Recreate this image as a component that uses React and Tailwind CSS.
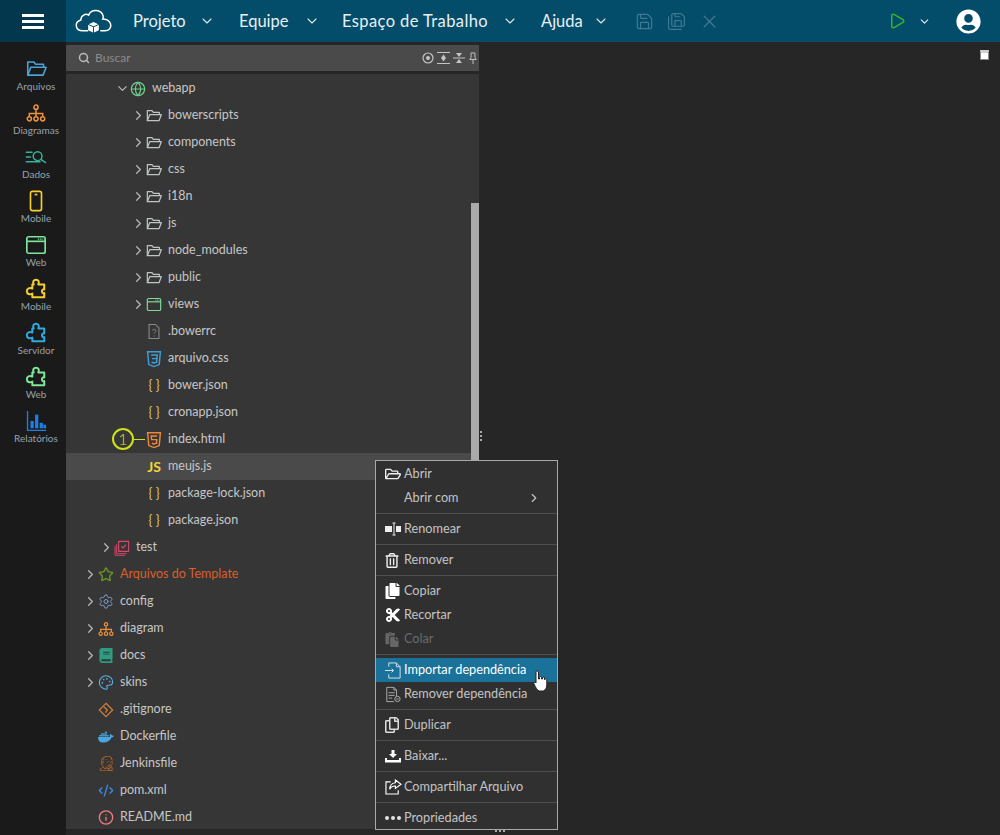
import { ChevronDown, ChevronRight, Globe, Save, SaveAll, X, Play, Settings, Star, Palette, Info, CodeXml, Search } from 'lucide-react'
import { FaCopy, FaCut, FaPaste, FaRegTrashAlt, FaRegCopy, FaDocker, FaJenkins, FaUserCircle, FaRegFolderOpen, FaBook } from 'react-icons/fa'

const font = { fontFamily: '"Lato", "Open Sans", sans-serif' }

function Puzzle({ className }) {
  return (
    <svg className={className} viewBox="0 0 24 24" fill="none" stroke="currentColor" strokeWidth="2.200" strokeLinejoin="round">
      <path d="M9.500 7C8 4 9.500 2 12 2s4 2 2.500 5H21v5.500c-1.500-.5-2.500.5-2.500 2s1 2.500 2.500 2V21H8v-4c-3 1.500-6 .5-6-2.500S5 10 8 11.500V7z" />
    </svg>
  )
}

function FolderIcon({ className }) {
  return (
    <svg className={className} viewBox="0 0 24 20" fill="none" stroke="currentColor" strokeWidth="1.800" strokeLinejoin="round">
      <path d="M2 17V2h7l2 2.500h9V8" />
      <path d="M2 17l3.500-9H23l-3.500 9z" />
    </svg>
  )
}

function WindowIcon({ className }) {
  return (
    <svg className={className} viewBox="0 0 24 24" fill="none" stroke="currentColor" strokeWidth="1.800">
      <rect x="2" y="3" width="20" height="18" rx="2" />
      <path d="M2 8h20" />
      <path d="M14 5.500h1.500M16.500 5.500H18M19 5.500h1" strokeWidth="1.400" />
    </svg>
  )
}

function NetworkIcon({ className }) {
  return (
    <svg className={className} viewBox="0 0 24 24" fill="none" stroke="currentColor" strokeWidth="1.800">
      <circle cx="12" cy="5" r="2.500" />
      <circle cx="4" cy="19" r="2.500" />
      <circle cx="12" cy="19" r="2.500" />
      <circle cx="20" cy="19" r="2.500" />
      <path d="M12 7.500v9M4 16.500V12.500h16v4" />
    </svg>
  )
}

function DataIcon({ className }) {
  return (
    <svg className={className} viewBox="0 0 26 20" fill="none" stroke="currentColor" strokeWidth="1.800" strokeLinecap="round">
      <path d="M1 4h7M1 10h5M1 16h8" />
      <circle cx="15" cy="9" r="5.500" />
      <path d="M19 13l6 4M10 16h8" />
    </svg>
  )
}

function PhoneIcon({ className }) {
  return (
    <svg className={className} viewBox="0 0 16 24" fill="none" stroke="currentColor" strokeWidth="1.800">
      <rect x="2" y="1.500" width="12" height="21" rx="2" />
      <path d="M6.500 5h3" />
    </svg>
  )
}

function ReportIcon({ className }) {
  return (
    <svg className={className} viewBox="0 0 24 24" fill="currentColor">
      <path d="M2 1h1.500v20.500H23V23H2z" />
      <rect x="6" y="12" width="3.500" height="8" />
      <rect x="11" y="5" width="3.500" height="15" />
      <rect x="16" y="14" width="3.500" height="6" />
      <rect x="20" y="16" width="3" height="4" />
    </svg>
  )
}

function ShieldIcon({ className, label }) {
  return (
    <svg className={className} viewBox="0 0 20 22" fill="none" stroke="currentColor" strokeWidth="1.800" strokeLinejoin="miter">
      <path d="M2 2h16l-1.500 16L10 20.500 3.500 18z" />
      <path d={label === '5' ? 'M14 6H6.500l.5 4.500h6.500l-.4 4.500L10 16l-2.700-1' : 'M6.500 6H14l-.8 9L10 16l-3-1M7.500 10.500h6'} />
    </svg>
  )
}

function TestIcon({ className }) {
  return (
    <svg className={className} viewBox="0 0 24 24" fill="none" stroke="currentColor" strokeWidth="1.700" strokeLinejoin="round">
      <rect x="7" y="2" width="15" height="15" />
      <path d="M4 6v14.500h15M1.500 9v14h15" strokeWidth="1.400" />
      <path d="M11 9.500l2.500 2.500 4.500-5" />
    </svg>
  )
}

function GitIcon({ className }) {
  return (
    <svg className={className} viewBox="0 0 24 24" fill="none" stroke="currentColor" strokeWidth="2">
      <path d="M12 2l10 10-10 10L2 12z" />
      <path d="M9 7l5 5-3 4" />
    </svg>
  )
}

function UnknownFile({ className }) {
  return (
    <svg className={className} viewBox="0 0 18 24" fill="none" stroke="currentColor" strokeWidth="1.500">
      <path d="M2 2h9l5 5v15H2z" />
      <path d="M7 11c0-3 4.500-3 4.500 0 0 2-2.300 2-2.300 4M9.200 17.500v1.500" strokeWidth="1.300" />
    </svg>
  )
}

function Braces() {
  return <span className="text-[#d7c66b] text-[13px] leading-none">{'{ }'}</span>
}

function Logo() {
  return (
    <svg className="w-[37px] h-[28px]" viewBox="0 0 38 28" fill="none" stroke="white" strokeWidth="1.500" strokeLinecap="round">
      <path d="M13 24H8c-8 0-9-9-2-11 0-5 5-7 8-5 3-7 13-6 15 1 0 1 0 2-.5 3 7 0 10 6 7 10-1 1.500-3 2-5 2h-4" />
      <path d="M19 15l5.500 2.500v6L19 26l-5.500-2.500v-6z" fill="white" stroke="none" />
      <path d="M13.500 17.500L19 20l5.500-2.500M19 20v6" stroke="#034d6b" strokeWidth="1" />
    </svg>
  )
}

function PushPin({ className }) {
  return (
    <svg className={className} viewBox="0 0 12 20" fill="none" stroke="currentColor" strokeWidth="1.500">
      <path d="M3 1.500h6v7l2 3H1l2-3zM6 11.500v7" />
    </svg>
  )
}

const NAV = [
  { label: 'Projeto', cls: 'w-[106px]', chev: 'mr-[24px]', text: '' },
  { label: 'Equipe', cls: 'w-[103px]', chev: 'mr-[22px]', text: '' },
  { label: 'Espaço de Trabalho', cls: 'w-[199px]', chev: 'mr-[23px]', text: 'tracking-[0.4px]' },
  { label: 'Ajuda', cls: 'w-[91px]', chev: 'mr-[23px]', text: '' },
]

const SIDE = [
  { label: 'Arquivos', color: 'text-[#4aa3d8]', icon: <FolderIcon className="w-[21px] h-[18px]" /> },
  { label: 'Diagramas', color: 'text-[#f0923a]', icon: <NetworkIcon className="w-[20px] h-[20px]" /> },
  { label: 'Dados', color: 'text-[#35b39b]', icon: <DataIcon className="w-[22px] h-[16px]" /> },
  { label: 'Mobile', color: 'text-[#f6cf2f]', icon: <PhoneIcon className="w-[16px] h-[22px]" /> },
  { label: 'Web', color: 'text-[#7fe59a]', icon: <WindowIcon className="w-[22px] h-[22px]" /> },
  { label: 'Mobile', color: 'text-[#f6cf2f]', icon: <Puzzle className="w-[22px] h-[22px]" /> },
  { label: 'Servidor', color: 'text-[#2fa9e0]', icon: <Puzzle className="w-[22px] h-[22px]" /> },
  { label: 'Web', color: 'text-[#7fe59a]', icon: <Puzzle className="w-[22px] h-[22px]" /> },
  { label: 'Relatórios', color: 'text-[#1c7fe8]', icon: <ReportIcon className="w-[22px] h-[22px]" /> },
]

const folder = <FolderIcon className="w-[17px] h-[14px] text-[#c0c6c6]" />
const json = <Braces />

const TREE = [
  { name: 'webapp', pl: 'pl-[48px]', open: true, icon: <Globe className="w-[16px] h-[16px] text-[#6fd08c]" strokeWidth={1.8} /> },
  { name: 'bowerscripts', pl: 'pl-[64px]', arrow: true, icon: folder },
  { name: 'components', pl: 'pl-[64px]', arrow: true, icon: folder },
  { name: 'css', pl: 'pl-[64px]', arrow: true, icon: folder },
  { name: 'i18n', pl: 'pl-[64px]', arrow: true, icon: folder },
  { name: 'js', pl: 'pl-[64px]', arrow: true, icon: folder },
  { name: 'node_modules', pl: 'pl-[64px]', arrow: true, icon: folder },
  { name: 'public', pl: 'pl-[64px]', arrow: true, icon: folder },
  { name: 'views', pl: 'pl-[64px]', arrow: true, icon: <WindowIcon className="w-[17px] h-[17px] text-[#7fd99a]" /> },
  { name: '.bowerrc', pl: 'pl-[64px]', icon: <UnknownFile className="w-[14px] h-[17px] text-[#8a8a8a]" /> },
  { name: 'arquivo.css', pl: 'pl-[64px]', icon: <ShieldIcon className="w-[16px] h-[18px] text-[#3f9fdc]" label="3" /> },
  { name: 'bower.json', pl: 'pl-[64px]', icon: json },
  { name: 'cronapp.json', pl: 'pl-[64px]', icon: json },
  { name: 'index.html', pl: 'pl-[64px]', mark: true, icon: <ShieldIcon className="w-[16px] h-[18px] text-[#f0873a]" label="5" /> },
  { name: 'meujs.js', pl: 'pl-[64px]', selected: true, icon: <span className="text-[#f4d435] text-[14px] font-bold leading-none">JS</span> },
  { name: 'package-lock.json', pl: 'pl-[64px]', icon: json },
  { name: 'package.json', pl: 'pl-[64px]', icon: json },
  { name: 'test', pl: 'pl-[32px]', arrow: true, icon: <TestIcon className="w-[16px] h-[16px] text-[#d8486a]" /> },
  { name: 'Arquivos do Template', pl: 'pl-[16px]', arrow: true, text: 'text-[#d9602a]', icon: <Star className="w-[17px] h-[17px] text-[#6b9a1e]" /> },
  { name: 'config', pl: 'pl-[16px]', arrow: true, icon: <Settings className="w-[17px] h-[17px] text-[#7b9cc8]" strokeWidth={1.5} /> },
  { name: 'diagram', pl: 'pl-[16px]', arrow: true, icon: <NetworkIcon className="w-[16px] h-[16px] text-[#f0923a]" /> },
  { name: 'docs', pl: 'pl-[16px]', arrow: true, icon: <FaBook className="w-[14px] h-[15px] text-[#2e9c80]" /> },
  { name: 'skins', pl: 'pl-[16px]', arrow: true, icon: <Palette className="w-[17px] h-[17px] text-[#5ab4ea]" strokeWidth={1.6} /> },
  { name: '.gitignore', pl: 'pl-[16px]', icon: <GitIcon className="w-[16px] h-[16px] text-[#cc7a3c]" /> },
  { name: 'Dockerfile', pl: 'pl-[16px]', icon: <FaDocker className="w-[16px] h-[16px] text-[#4aa8e0]" /> },
  { name: 'Jenkinsfile', pl: 'pl-[16px]', icon: <FaJenkins className="w-[15px] h-[15px] text-[#d9701e]" /> },
  { name: 'pom.xml', pl: 'pl-[16px]', icon: <CodeXml className="w-[17px] h-[17px] text-[#3f8ae8]" /> },
  { name: 'README.md', pl: 'pl-[16px]', icon: <Info className="w-[17px] h-[17px] text-[#f07a80]" /> },
]

function TreeRow({ row }) {
  return (
    <div className={`relative flex items-center h-[27px] shrink-0 ${row.pl} ${row.selected ? 'bg-[#4a4a4a]' : ''}`}>
      <div className="w-[16px] flex justify-center text-[#b5b5b5]">
        {row.open && <ChevronDown className="w-[15px] h-[15px]" strokeWidth={2} />}
        {row.arrow && <ChevronRight className="w-[15px] h-[15px]" strokeWidth={2} />}
      </div>
      <div className="w-[16px] flex justify-center items-center">{row.icon}</div>
      <span className={`ml-[6px] text-[12.500px] ${row.text || 'text-[#c6c6c6]'}`}>{row.name}</span>
      {row.mark && (
        <>
          <div className="absolute left-[46px] top-[2px] w-[22px] h-[22px] rounded-full border-2 border-[#cfe01c] flex items-center justify-center text-[#cfe01c] text-[16px] font-light leading-none">1</div>
          <div className="absolute left-[68px] top-[13px] w-[11px] h-px bg-[#cfe01c]" />
        </>
      )}
    </div>
  )
}

function Sep() {
  return <div className="h-px my-[3px] bg-[#4f4f4f]" />
}

function MenuItem({ icon, label, className = 'h-[24px] text-[#c4c4c4]', right }) {
  return (
    <div className={`flex items-center pl-[9px] pr-[16px] text-[12.700px] ${className}`}>
      <div className="w-[19px] flex justify-start items-center">{icon}</div>
      <span>{label}</span>
      {right && <ChevronRight className="ml-auto w-[14px] h-[14px] text-[#c4c4c4]" />}
    </div>
  )
}

function ContextMenu() {
  return (
    <div className="absolute left-[375px] top-[460px] w-[183px] h-[370px] bg-[#303030] border border-[#a8a8a8] pt-[1px] z-10">
      <MenuItem icon={<FaRegFolderOpen className="w-[16px] h-[16px] text-[#eee]" />} label="Abrir" />
      <MenuItem label="Abrir com" right />
      <Sep />
      <MenuItem label="Renomear" icon={
        <svg className="w-[16px] h-[14px] text-[#eee]" viewBox="0 0 16 14" fill="currentColor">
          <rect x="0" y="4" width="7" height="6" />
          <rect x="11" y="4" width="5" height="6" />
          <path d="M7.500 1h3M9 1v12M7.500 13h3" stroke="currentColor" fill="none" />
        </svg>
      } />
      <Sep />
      <MenuItem icon={<FaRegTrashAlt className="w-[14px] h-[15px] text-[#eee]" />} label="Remover" />
      <Sep />
      <MenuItem icon={<FaCopy className="w-[15px] h-[16px] text-white" />} label="Copiar" />
      <MenuItem icon={<FaCut className="w-[16px] h-[16px] text-white" />} label="Recortar" />
      <MenuItem icon={<FaPaste className="w-[14px] h-[15px] text-[#666]" />} label="Colar" className="h-[24px] text-[#6a6a6a]" />
      <Sep />
      <MenuItem label="Importar dependência" className="h-[24px] bg-[#1a7199] text-white" icon={
        <svg className="w-[17px] h-[17px] text-[#d8e8ee]" viewBox="0 0 18 18" fill="none" stroke="currentColor" strokeWidth="1">
          <path d="M4 5V1h8l4 4v12H4v-4M12 1v4h4M0 9h9M7 7l2 2-2 2" />
        </svg>
      } />
      <MenuItem label="Remover dependência" icon={
        <svg className="w-[16px] h-[17px] text-[#b5b5b5]" viewBox="0 0 18 18" fill="none" stroke="currentColor" strokeWidth="1">
          <path d="M10 17H2V1h8l3 3v7M10 1v3h3M4 7h7M4 10h7M4 13h4" />
          <circle cx="14" cy="14" r="3" />
          <path d="M12.500 14h3" />
        </svg>
      } />
      <Sep />
      <MenuItem icon={<FaRegCopy className="w-[14px] h-[16px] text-[#ddd]" />} label="Duplicar" />
      <Sep />
      <MenuItem label="Baixar..." icon={
        <svg className="w-[16px] h-[14px] text-white" viewBox="0 0 16 14" fill="currentColor">
          <path d="M6.500 1h3v4h2.500L8 9 4 5h2.500z" />
          <path d="M0 9h2v2h12V9h2v4.500H0z" />
        </svg>
      } />
      <Sep />
      <MenuItem label="Compartilhar Arquivo" icon={
        <svg className="w-[17px] h-[16px] text-white" viewBox="0 0 18 17" fill="none" stroke="currentColor" strokeWidth="1.200">
          <path d="M6 3H1v13h13v-4" />
          <path d="M11 1l6 4.500L11 10V7.500c-3 0-5 1-6 3.500 0-4 2-6.500 6-7z" />
        </svg>
      } />
      <Sep />
      <MenuItem label="Propriedades" icon={
        <div className="flex gap-[2px]">
          <div className="w-[4px] h-[4px] rounded-full bg-[#e5e5e5]" />
          <div className="w-[4px] h-[4px] rounded-full bg-[#e5e5e5]" />
          <div className="w-[4px] h-[4px] rounded-full bg-[#e5e5e5]" />
        </div>
      } />
      {/* cursor da captura */}
      <svg className="absolute left-[157px] top-[209px] w-[15px] h-[22px]" viewBox="0 0 15 22" fill="white" stroke="#222" strokeWidth="1">
        <path d="M3 2c0-1.500 2.500-1.500 2.500 0v7h1V7.500c0-1.300 2-1.300 2 0V9h1V8c0-1.300 2-1.300 2 0v1.500h.5c0-1 1.800-1 1.800.3V15c0 3-1.500 5-3.500 6H6c-2-1-3-3-5-7-.8-1.500 1-2.500 2-1V2z" />
      </svg>
    </div>
  )
}

export default function App() {
  return (
    <div className="relative w-[1000px] h-[835px] overflow-hidden bg-[#262626] flex flex-col" style={font}>
      <header className="flex h-[42px] shrink-0 bg-[#034d6b] text-white">
        <div className="w-[66px] bg-[#03374e] flex flex-col justify-center items-center gap-[3px]">
          <div className="w-[22px] h-[3px] bg-white" />
          <div className="w-[22px] h-[3px] bg-white" />
          <div className="w-[22px] h-[3px] bg-white" />
        </div>
        <div className="ml-[9px] w-[58px] flex items-center"><Logo /></div>
        {NAV.map((n) => (
          <div key={n.label} className={`flex items-center ${n.cls}`}>
            <span className={`text-[16.500px] text-[#e8f0f4] ${n.text}`}>{n.label}</span>
            <ChevronDown className={`ml-auto w-[16px] h-[16px] text-[#dfe8ec] ${n.chev}`} strokeWidth={1.6} />
          </div>
        ))}
        <div className="flex items-center gap-[13px] text-[#3f7a94] ml-[3px]">
          <Save className="w-[19px] h-[19px]" strokeWidth={1.5} />
          <SaveAll className="w-[19px] h-[19px]" strokeWidth={1.5} />
          <X className="w-[21px] h-[21px]" strokeWidth={1.5} />
        </div>
        <div className="ml-auto flex items-center">
          <Play className="w-[18px] h-[20px] text-[#2fb82a]" strokeWidth={2} />
          <ChevronDown className="ml-[12px] w-[13px] h-[13px] text-[#e5edf0]" strokeWidth={2} />
          <FaUserCircle className="ml-[25px] mr-[19px] w-[25px] h-[25px] text-white" />
        </div>
      </header>

      <div className="flex flex-1 min-h-0">
        <aside className="w-[66px] shrink-0 bg-[#1a1a1a] pt-[16px] pl-[6px] flex flex-col">
          {SIDE.map((s, i) => (
            <div key={i} className="h-[44px] shrink-0 flex flex-col items-center">
              <div className={`h-[22px] flex items-center justify-center ${s.color}`}>{s.icon}</div>
              <span className="h-[12px] leading-[12px] text-[10px] text-[#98a2ab]">{s.label}</span>
            </div>
          ))}
        </aside>

        <section className="w-[413px] shrink-0 flex flex-col pt-[3px]">
          <div className="h-[26px] shrink-0 bg-[#4a4a4a] flex items-center pl-[12px] pr-[2px] text-[#c4c4c4]">
            <Search className="w-[12px] h-[12px] text-[#bdbdbd]" strokeWidth={3} />
            <span className="ml-[5px] text-[12px] text-[#8a8a8a]">Buscar</span>
            <div className="ml-auto flex items-center gap-[3px]">
              <svg className="w-[12px] h-[12px]" viewBox="0 0 12 12" fill="none" stroke="currentColor" strokeWidth="1.200">
                <circle cx="6" cy="6" r="5" />
                <circle cx="6" cy="6" r="2" fill="currentColor" stroke="none" />
              </svg>
              <svg className="w-[13px] h-[12px]" viewBox="0 0 13 12" fill="currentColor" stroke="currentColor">
                <path d="M0 .500h13M0 11.500h13" fill="none" />
                <path d="M6.500 2.500L9 6l-2.500 3.500L4 6z" stroke="none" />
              </svg>
              <svg className="w-[12px] h-[12px]" viewBox="0 0 12 12" fill="currentColor" stroke="currentColor">
                <path d="M0 6h12" fill="none" />
                <path d="M3 1h6L6 5zM3 11h6L6 7z" stroke="none" />
              </svg>
              <PushPin className="w-[8px] h-[13px] ml-[1px]" />
            </div>
          </div>
          <div className="relative flex-1 mt-[3px] mb-[6px] pt-[1px] bg-[#363636] flex flex-col overflow-hidden">
            {TREE.map((r) => <TreeRow key={r.name} row={r} />)}
            <div className="absolute right-0 top-[129px] w-[8px] h-[258px] bg-[#aaaaaa]" />
          </div>
        </section>

        <main className="relative flex-1 flex flex-col">
          <div className="flex justify-end pt-[8px] pr-[11px]">
            <div className="w-[9px] h-[10px] bg-white border-t-[3px] border-[#d0d0d0] border-x border-b border-x-[#888] border-b-[#888]" />
          </div>
        </main>
      </div>

      <div className="absolute left-[480px] top-[431px] flex flex-col gap-[2px]">
        <div className="w-[2px] h-[2px] bg-[#aaa]" />
        <div className="w-[2px] h-[2px] bg-[#aaa]" />
        <div className="w-[2px] h-[2px] bg-[#aaa]" />
      </div>
      <div className="absolute left-[495px] top-[830px] flex gap-[2px]">
        <div className="w-[2px] h-[2px] bg-[#aaa]" />
        <div className="w-[2px] h-[2px] bg-[#aaa]" />
        <div className="w-[2px] h-[2px] bg-[#aaa]" />
      </div>

      <ContextMenu />
    </div>
  )
}
